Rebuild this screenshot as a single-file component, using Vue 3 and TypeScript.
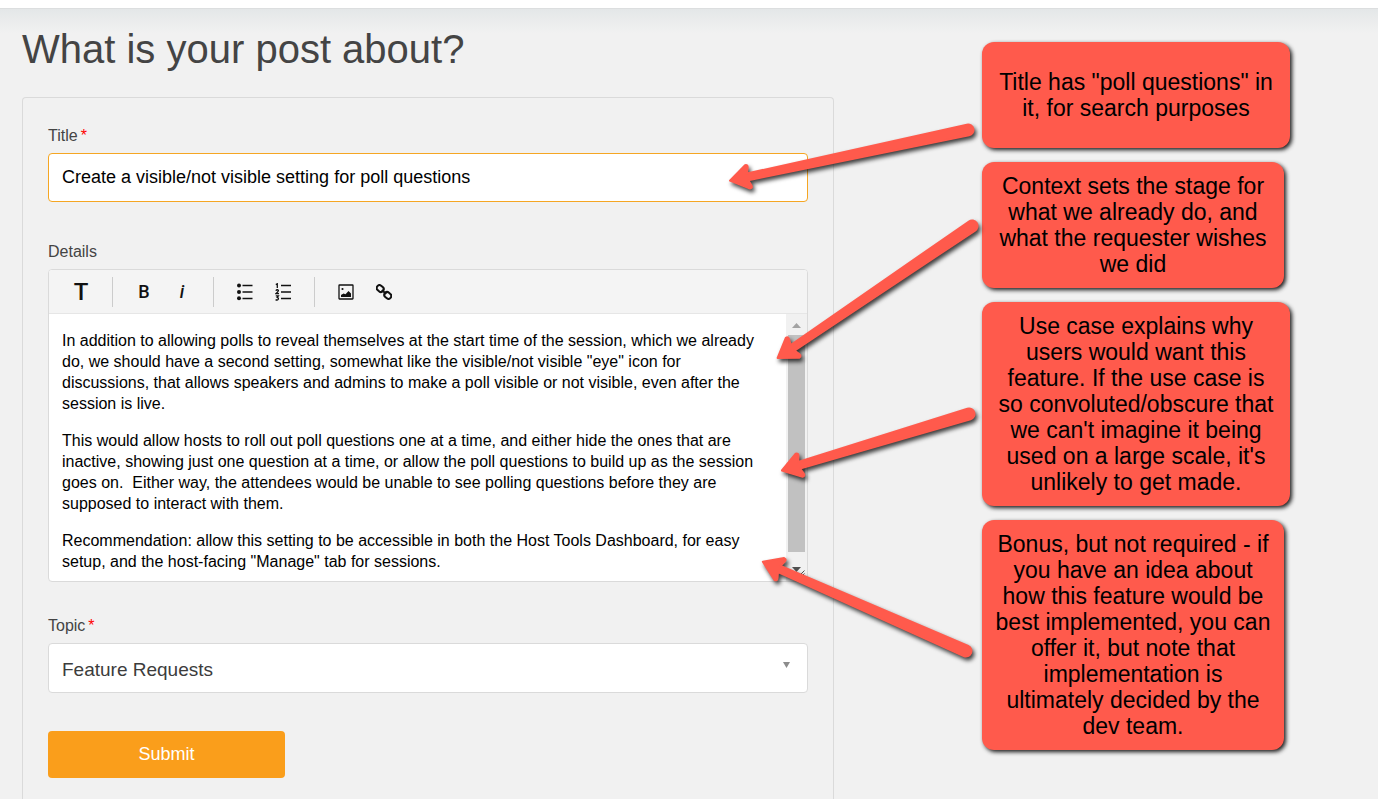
<script setup lang="ts">
import { computed, ref } from 'vue'

interface Point {
  x: number
  y: number
}

interface Arrow {
  tip: Point
  tail: Point
}

const title = ref('Create a visible/not visible setting for poll questions')
const topic = ref('Feature Requests')

const paragraphs: string[] = [
  'In addition to allowing polls to reveal themselves at the start time of the session, which we already do, we should have a second setting, somewhat like the visible/not visible "eye" icon for discussions, that allows speakers and admins to make a poll visible or not visible, even after the session is live.',
  'This would allow hosts to roll out poll questions one at a time, and either hide the ones that are inactive, showing just one question at a time, or allow the poll questions to build up as the session goes on.\u00a0 Either way, the attendees would be unable to see polling questions before they are supposed to interact with them.',
  'Recommendation: allow this setting to be accessible in both the Host Tools Dashboard, for easy setup, and the host-facing "Manage" tab for sessions.',
]

const callouts: { size: string; lines: string[] }[] = [
  { size: 'wide', lines: ['Title has "poll questions" in', 'it, for search purposes'] },
  {
    size: 'narrow',
    lines: ['Context sets the stage for', 'what we already do, and', 'what the requester wishes', 'we did'],
  },
  {
    size: 'wide',
    lines: [
      'Use case explains why',
      'users would want this',
      'feature. If the use case is',
      'so convoluted/obscure that',
      "we can't imagine it being",
      "used on a large scale, it's",
      'unlikely to get made.',
    ],
  },
  {
    size: 'narrow',
    lines: [
      'Bonus, but not required - if',
      'you have an idea about',
      'how this feature would be',
      'best implemented, you can',
      'offer it, but note that',
      'implementation is',
      'ultimately decided by the',
      'dev team.',
    ],
  },
]

const arrows: Arrow[] = [
  { tip: { x: 728, y: 181 }, tail: { x: 968, y: 130 } },
  { tip: { x: 776, y: 359 }, tail: { x: 972, y: 226 } },
  { tip: { x: 780, y: 471 }, tail: { x: 969, y: 414 } },
  { tip: { x: 761, y: 561 }, tail: { x: 966, y: 651 } },
]

// Each arrow is built along the x axis from its tip, then turned into place.
const arrowShapes = computed(() =>
  arrows.map(({ tip, tail }) => {
    const dx = tail.x - tip.x
    const dy = tail.y - tip.y
    const length = Math.hypot(dx, dy)
    const angle = (Math.atan2(dy, dx) * 180) / Math.PI
    return {
      d: `M2 0 L20 -12 Q23 -12 22 -9 L20 -3.400 L${length} -5.500 A5.500 5.500 0 0 1 ${length} 5.500 L20 3.400 L22 9 Q23 12 20 12 Z`,
      transform: `translate(${tip.x} ${tip.y}) rotate(${angle})`,
    }
  }),
)
</script>

<template>
  <div class="page">
    <div class="topbar"></div>
    <main class="content">
      <section class="post">
        <h1>What is your post about?</h1>
        <form class="card" @submit.prevent>
          <div class="field title-field">
            <label for="post-title">Title<span class="required">*</span></label>
            <input id="post-title" v-model="title" type="text" />
          </div>

          <div class="field details-field">
            <span id="details-label" class="label">Details</span>
            <div class="editor">
              <div class="toolbar" role="toolbar" aria-label="Formatting">
                <button type="button" class="tool heading-tool" aria-label="Text style">T</button>
                <span class="divider"></span>
                <button type="button" class="tool letter-tool" aria-label="Bold">B</button>
                <button type="button" class="tool letter-tool italic" aria-label="Italic">i</button>
                <span class="divider"></span>
                <button type="button" class="tool" aria-label="Bulleted list">
                  <svg width="16" height="18" viewBox="0 0 16 18">
                    <circle cx="2" cy="2.500" r="2" />
                    <circle cx="2" cy="9" r="2" />
                    <circle cx="2" cy="15.300" r="2" />
                    <path d="M5.500 2.500H15.500M5.500 9H15.500M5.500 15.500H15.500" class="line" />
                  </svg>
                </button>
                <button type="button" class="tool" aria-label="Numbered list">
                  <svg width="16" height="18" viewBox="0 0 16 18">
                    <path d="M6 2.500H16M6 9H16M6 15.500H16" class="line" />
                    <path
                      d="M.8 1.600L2.300 .8V5M.7 7.600Q2.400 6 3.400 7.400Q3.600 8.600 .8 10.700H4M.8 12.800H3.400L2.200 14.400Q3.800 14.800 3.200 16.300Q2.200 17.600 .6 16.600"
                      class="line"
                    />
                  </svg>
                </button>
                <span class="divider"></span>
                <button type="button" class="tool" aria-label="Insert image">
                  <svg width="16" height="16" viewBox="0 0 16 16">
                    <rect x="1" y="1" width="14" height="14" rx="0.500" class="line" />
                    <circle cx="4.500" cy="5" r="1.100" />
                    <path d="M3 13V11L5.500 9.500L7.500 10.300L10.500 7L13 9.500V13Z" />
                  </svg>
                </button>
                <button type="button" class="tool" aria-label="Insert link">
                  <svg width="16" height="16" viewBox="0 0 16 16">
                    <g class="chain" transform="rotate(42 8 8)">
                      <rect x="-0.800" y="5.200" width="7.400" height="5.600" rx="2.800" />
                      <rect x="9.400" y="5.200" width="7.400" height="5.600" rx="2.800" />
                      <path d="M5 8H11" />
                    </g>
                  </svg>
                </button>
              </div>
              <div class="editor-body">
                <div
                  class="editor-text"
                  contenteditable="true"
                  role="textbox"
                  aria-multiline="true"
                  aria-labelledby="details-label"
                  spellcheck="false"
                >
                  <p v-for="(text, i) in paragraphs" :key="i">{{ text }}</p>
                </div>
                <div class="scrollbar" aria-hidden="true">
                  <svg class="scroll-up" width="9" height="5" viewBox="0 0 9 5"><path d="M0 5L4.500 0L9 5Z" /></svg>
                  <span class="thumb"></span>
                  <svg class="scroll-down" width="17" height="10" viewBox="0 0 17 10">
                    <path d="M4 1H13L8.500 6Z" />
                    <path d="M12 9L16.500 4.500M15 9L16.500 7.500" class="grip" />
                  </svg>
                </div>
              </div>
            </div>
          </div>

          <div class="field topic-field">
            <label for="post-topic">Topic<span class="required">*</span></label>
            <div class="select-wrap">
              <select id="post-topic" v-model="topic">
                <option>Feature Requests</option>
              </select>
              <svg class="caret" width="7" height="6" viewBox="0 0 7 6"><path d="M0 0H7L3.500 6Z" /></svg>
            </div>
          </div>

          <button type="submit" class="submit">Submit</button>
        </form>
      </section>

      <aside class="callouts" aria-label="Notes">
        <p v-for="(callout, i) in callouts" :key="i" class="callout" :class="callout.size">
          <span v-for="line in callout.lines" :key="line">{{ line }}</span>
        </p>
      </aside>
    </main>

    <svg class="arrows" aria-hidden="true">
      <path v-for="(shape, i) in arrowShapes" :key="i" :d="shape.d" :transform="shape.transform" />
    </svg>
  </div>
</template>

<style>
body {
  margin: 0;
  background: #f1f1f1;
}
</style>

<style scoped>
* {
  box-sizing: border-box;
}

.page {
  position: relative;
  display: flex;
  flex-direction: column;
  min-height: 100vh;
  font-family: 'Liberation Sans', Arial, sans-serif;
  font-size: 16px;
  color: #444;
  background: #f1f1f1;
}

.topbar {
  height: 8px;
  background: #fff;
}

.content {
  flex: 1;
  display: flex;
  gap: 148px;
  padding: 0 22px;
  border-top: 1px solid #dcdedf;
  background: linear-gradient(#e4e7e8, #f1f1f1 24px);
}

.post {
  flex: 0 1 812px;
  min-width: 0;
  display: flex;
  flex-direction: column;
  padding-top: 16px;
}

h1 {
  margin: 0 0 24px;
  font-size: 40px;
  font-weight: 400;
  line-height: 48px;
  color: #444;
}

.card {
  flex: 1;
  padding: 29px 25px 20px;
  border: 1px solid #dadada;
  border-bottom: 0;
  border-radius: 4px 4px 0 0;
}

.field {
  display: flex;
  flex-direction: column;
  gap: 8px;
}

.title-field {
  margin-bottom: 41px;
}

.details-field {
  margin-bottom: 35px;
}

.topic-field {
  margin-bottom: 38px;
}

label,
.label {
  line-height: 18px;
}

.required {
  margin-left: 3px;
  color: #f00;
}

input,
select {
  width: 100%;
  margin: 0;
  padding: 0 13px;
  border: 1px solid #dadada;
  border-radius: 4px;
  background: #fff;
  font-family: inherit;
  outline: none;
}

input {
  height: 49px;
  border-color: #f5a623;
  font-size: 18px;
  color: #000;
}

select {
  height: 50px;
  padding-top: 2px;
  appearance: none;
  font-size: 19px;
  color: #3c3c3c;
}

.select-wrap {
  position: relative;
}

.caret {
  position: absolute;
  top: 19px;
  right: 18px;
  fill: #8c8c8c;
  pointer-events: none;
}

.editor {
  border: 1px solid #dadada;
  border-radius: 4px;
  background: #fff;
  overflow: hidden;
}

.toolbar {
  display: flex;
  align-items: center;
  height: 44px;
  padding: 0 13px;
  border-bottom: 1px solid #e6e6e6;
  background: #f4f4f4;
}

.tool {
  display: flex;
  align-items: center;
  justify-content: center;
  width: 38px;
  height: 30px;
  padding: 0;
  border: 0;
  background: none;
  font-family: Roboto, sans-serif;
  font-weight: 500;
  color: #111;
}

.heading-tool {
  font-size: 24px;
}

.letter-tool {
  font-size: 18px;
}

.italic {
  font-style: italic;
}

.tool svg {
  fill: #111;
}

.line {
  fill: none;
  stroke: #111;
  stroke-width: 1.3;
}

.chain {
  fill: none;
  stroke: #111;
  stroke-width: 2;
}

.divider {
  width: 1px;
  height: 30px;
  margin: 0 12px;
  background: #ccc;
}

.editor-body {
  display: flex;
  height: 267px;
}

.editor-text {
  flex: 1;
  min-width: 0;
  padding: 16px 20px 0 13px;
  line-height: 21px;
  color: #000;
  outline: none;
}

.editor-text p {
  margin: 0 0 16px;
}

.scrollbar {
  display: flex;
  flex-direction: column;
  align-items: center;
  width: 21px;
  padding: 9px 2px 5px;
  background: #f1f1f1;
}

.scroll-up {
  fill: #a3a3a3;
}

.thumb {
  flex: 1;
  width: 17px;
  margin: 7px 0 14px;
  background: #c1c1c1;
}

.scroll-down {
  fill: #505050;
}

.grip {
  fill: none;
  stroke: #505050;
}

.submit {
  display: block;
  width: 237px;
  height: 47px;
  padding: 0;
  border: 0;
  border-radius: 4px;
  background: #fa9e1b;
  font-family: inherit;
  font-size: 18px;
  color: #fff;
}

.callouts {
  flex: 0 0 308px;
  display: flex;
  flex-direction: column;
  gap: 14px;
  padding-top: 33px;
}

.callout {
  display: flex;
  flex-direction: column;
  justify-content: center;
  min-height: 106px;
  margin: 0;
  padding: 11px 8px;
  border-radius: 12px;
  background: #ff5a4c;
  box-shadow: 2px 2px 4px rgba(0, 0, 0, 0.9);
  font-size: 23px;
  line-height: 26px;
  text-align: center;
  white-space: nowrap;
  color: #000;
}

.narrow {
  width: 302px;
}

.arrows {
  position: absolute;
  inset: 0;
  width: 100%;
  height: 100%;
  overflow: visible;
  pointer-events: none;
  fill: #ff5a4c;
  stroke: #ff5a4c;
  stroke-width: 2;
  stroke-linejoin: round;
  filter: drop-shadow(2px 3px 2px rgba(0, 0, 0, 0.75));
}
</style>
